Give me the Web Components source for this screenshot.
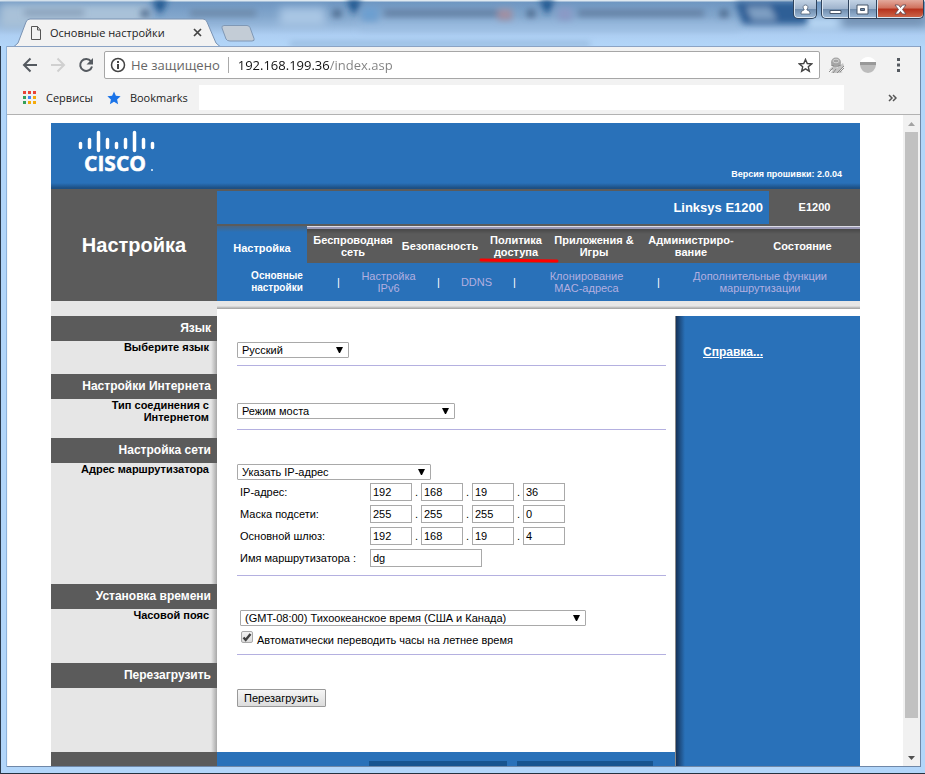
<!DOCTYPE html>
<html lang="ru">
<head>
<meta charset="utf-8">
<title>Основные настройки</title>
<style>
  body {
    margin: 0;
    font-family: "Liberation Sans", Arial, sans-serif;
    font-size: 11px;
    line-height: 12px;
    color: #000;
  }
</style>
</head>
<body>
<browser-window>
  <router-page></router-page>
</browser-window>

<script>
class TabStrip extends HTMLElement {
  constructor() {
    super();
    this.attachShadow({ mode: 'open' });
  }

  connectedCallback() {
    this.shadowRoot.innerHTML = `
      <style>
        :host {
          display: block;
          position: relative;
          height: 46px;
          overflow: hidden;
          background: linear-gradient(#dfe9f0 0, #dfe9f0 1px, #6f97c2 2px, #82a6cc 16px, #94b6da 25px, #aecff3 35px, #b2d5f8 46px);
        }
        .glass {
          position: absolute;
          inset: 0;
          width: 100%;
          height: 100%;
        }
        .tabs {
          position: relative;
          display: grid;
          grid-template-columns: 206px 40px;
          align-items: end;
          height: 47px;
          padding-left: 14px;
        }
        .tab {
          display: grid;
          height: 29px;
        }
        .tab > * {
          grid-area: 1 / 1;
        }
        .tab > svg {
          width: 206px;
          height: 29px;
        }
        .caption {
          display: flex;
          align-items: center;
          gap: 8px;
          padding: 0 18px 0 16px;
          font: 11px/16px "Open Sans", "Noto Sans", sans-serif;
          color: #222;
        }
        .caption span {
          flex: 1;
          white-space: nowrap;
        }
        .caption svg {
          display: block;
        }
        button {
          padding: 0;
          border: 0;
          background: none;
        }
        .new {
          align-self: start;
          margin-top: 25px;
          margin-left: -4px;
        }
        .controls {
          position: absolute;
          top: 0;
          right: 1px;
          display: flex;
          gap: 4px;
        }
        .controls div {
          display: flex;
        }
        .controls button {
          display: grid;
          place-items: center;
          box-sizing: border-box;
          width: 28px;
          height: 19px;
          border: solid #2f435c;
          border-width: 0 1px 1px 0;
          background: linear-gradient(#c3d3e5, #9fb4cd 48%, #6f8cad 50%, #9dbad8);
          box-shadow: inset 1px 0 #dbe6f1, inset 0 -1px #dbe6f1;
        }
        .controls button:first-child {
          border-left-width: 1px;
          border-bottom-left-radius: 5px;
        }
        .controls button:last-child {
          border-bottom-right-radius: 5px;
        }
        .controls .user {
          width: 24px;
        }
        .controls .close {
          width: 47px;
          background: linear-gradient(#e3a99c, #d0705c 45%, #b6311c 50%, #cd6a4c);
        }
      </style>
      <svg class="glass" viewBox="0 0 925 46" preserveAspectRatio="none" aria-hidden="true">
        <defs>
          <filter id="soft" x="-30%" y="-60%" width="160%" height="220%"><feGaussianBlur stdDeviation="4"/></filter>
          <filter id="fine" x="-30%" y="-60%" width="160%" height="220%"><feGaussianBlur stdDeviation="3"/></filter>
        </defs>
        <g filter="url(#soft)">
          <rect x="0" y="4" width="150" height="24" fill="#a9c1d8"/>
          <rect x="280" y="8" width="45" height="18" fill="#a9c6e4"/>
          <rect x="360" y="24" width="380" height="6" fill="#9abce0"/>
          <rect x="805" y="18" width="34" height="10" fill="#bddcf8"/>
          <rect x="842" y="16" width="83" height="9" fill="#6f8cad"/>
        </g>
        <g filter="url(#fine)">
          <path d="M152 0h16l-8 15zM346 0h16l-8 15zM539 0h16l-8 15z" fill="#1f558d"/>
          <path d="M735 2h72v22h-64z" fill="#2e5f96"/>
          <path d="M746 7h24l7 13h-25z" fill="#7e9fc3"/>
          <rect x="24" y="9" width="60" height="7" fill="#8aa2bb"/>
          <rect x="190" y="10" width="66" height="6" fill="#6b86a6"/>
          <rect x="362" y="7" width="16" height="14" fill="#6d9fd0"/>
          <rect x="384" y="10" width="116" height="6" fill="#607c9f"/>
          <rect x="498" y="9" width="14" height="11" fill="#a18fa2"/>
          <rect x="558" y="8" width="14" height="12" fill="#8b9ac6"/>
          <rect x="578" y="10" width="126" height="6" fill="#607c9f"/>
          <path d="M141 10h8v7h-8zM333 10h8v7h-8zM527 10h8v7h-8zM720 10h8v7h-8z" fill="#486588"/>
          <rect x="290" y="42" width="300" height="4" fill="#8fb1d6"/>
        </g>
      </svg>
      <div class="tabs">
        <div class="tab">
          <svg viewBox="0 0 206 29" aria-hidden="true">
            <path d="M0 29 4 25 12 4q1-3 4-3h173q3 0 4 3l9 21 4 4z" fill="#f2f2f2"/>
            <path d="M0 28.500 4 25 12 4q1-3 4-3h173q3 0 4 3l9 21 4 3.500" fill="none" stroke="#7a93b3"/>
          </svg>
          <div class="caption">
            <svg width="12" height="14" viewBox="0 0 12 14" fill="none" stroke="#555"><path d="M1.500.500h6l3 3.500v9.500h-9zM7.500.500v3.500h3"/></svg>
            <span>Основные настройки</span>
            <button aria-label="Закрыть вкладку"><svg width="9" height="9" viewBox="0 0 9 9" stroke="#444" stroke-width="1.700"><path d="m1 1 7 7m0-7-7 7"/></svg></button>
          </div>
        </div>
        <button class="new" aria-label="Новая вкладка">
          <svg width="34" height="17" viewBox="0 0 34 17"><path d="M3 .500h23q2 0 3 2l4 11q1 2.500-2 2.500H9q-3 0-4-2L1 3q-1-2 2-2.500z" fill="#c3ccd6" stroke="#8098b5"/></svg>
        </button>
      </div>
      <div class="controls">
        <div>
          <button class="user" aria-label="Пользователь"><svg width="11" height="11" viewBox="0 0 11 11" fill="#fff" stroke="#46566b" stroke-width=".7"><path d="M5.500 1a2.300 2.300 0 0 1 1.400 4.200v.8q3.100.5 3.100 3v1h-9v-1q0-2.500 3.100-3v-.8a2.300 2.300 0 0 1 1.400-4.200z"/></svg></button>
        </div>
        <div>
          <button aria-label="Свернуть"><svg width="13" height="11" viewBox="0 0 13 11"><path d="M1 6.500h11v3h-11z" fill="#fff" stroke="#46566b"/></svg></button>
          <button aria-label="Развернуть"><svg width="13" height="11" viewBox="0 0 13 11"><path d="M1 1h11v9h-11zM4.500 4.500v2h4v-2z" fill="#fff" fill-rule="evenodd" stroke="#46566b"/></svg></button>
          <button class="close" aria-label="Закрыть"><svg width="13" height="11" viewBox="0 0 13 11"><path d="M1 1h3.500l2 2.500 2-2.500h3.500l-3.500 4.500 3.500 4.500h-3.500l-2-2.500-2 2.500h-3.500l3.500-4.500z" fill="#fff" stroke="#5a4850" stroke-width=".8"/></svg></button>
        </div>
      </div>
    `;
  }
}

customElements.define('tab-strip', TabStrip);

class BrowserToolbar extends HTMLElement {
  constructor() {
    super();
    this.attachShadow({ mode: 'open' });
  }

  connectedCallback() {
    this.shadowRoot.innerHTML = `
      <style>
        :host {
          display: block;
          border-top: 1px solid #8ba3c4;
          border-bottom: 1px solid #b2b2b2;
          background: #f2f2f2;
          font: 11px/16px "Open Sans", "Noto Sans", sans-serif;
          color: #222;
        }
        svg {
          display: block;
        }
        button {
          padding: 0;
          border: 0;
          background: none;
        }
        .row {
          display: flex;
          align-items: center;
        }
        .address {
          gap: 12px;
          padding: 4px 15px;
        }
        .omnibox {
          display: flex;
          align-items: center;
          flex: 1;
          box-sizing: border-box;
          height: 28px;
          margin: 0 -4px 0 -2px;
          padding: 0 6px 0 5px;
          border: 1px solid #a6a6a6;
          border-radius: 2px;
          background: #fff;
          font-size: 13px;
        }
        .omnibox span {
          margin: 0 8px 0 5px;
          color: #666;
        }
        .omnibox input {
          flex: 1;
          min-width: 0;
          height: 16px;
          padding: 0 0 0 9px;
          border: 0;
          border-left: 1px solid #aaa;
          font: inherit;
          color: transparent;
          background: linear-gradient(90deg, #111 101px, #808080 101px);
          background-clip: text;
          outline: 0;
        }
        .extensions {
          gap: 14px;
        }
        .bookmarks {
          padding: 2px 23px 4px 16px;
        }
        .bookmarks a {
          display: flex;
          align-items: center;
          gap: 9px;
          margin-right: 14px;
          color: inherit;
          text-decoration: none;
        }
        .bookmarks a + a {
          margin-right: 11px;
        }
        .blank {
          flex: 1;
          height: 25px;
          margin-right: 44px;
          background: #fff;
        }
      </style>
      <div class="row address">
        <button aria-label="Назад"><svg width="16" height="16" viewBox="0 0 16 16" fill="none" stroke="#555a60" stroke-width="2"><path d="M15 8H2M8.500 1.500 2 8l6.500 6.500"/></svg></button>
        <button aria-label="Вперёд"><svg width="16" height="16" viewBox="0 0 16 16" fill="none" stroke="#d0d0d0" stroke-width="2"><path d="M1 8h13M7.500 1.500 14 8l-6.500 6.500"/></svg></button>
        <button aria-label="Обновить"><svg width="16" height="16" viewBox="0 0 16 16"><path d="M13 4.300A6 6 0 1 0 14 9.500" fill="none" stroke="#555a60" stroke-width="2"/><path d="M15 1v6.500H8.500z" fill="#555a60"/></svg></button>
        <div class="omnibox">
          <svg width="16" height="16" viewBox="0 0 16 16"><circle cx="8" cy="8" r="6.500" fill="none" stroke="#444" stroke-width="1.500"/><path d="M7 4h2v2h-2zM7 7h2v5h-2z" fill="#444"/></svg>
          <span>Не защищено</span>
          <input type="text" aria-label="Адрес" value="192.168.199.36/index.asp">
          <button aria-label="Добавить в закладки"><svg width="15" height="15" viewBox="0 0 16 16" fill="none" stroke="#444" stroke-width="1.500"><path d="m8 1.500 1.900 4.400 4.700.4-3.600 3.100 1.100 4.700L8 11.600l-4.100 2.500L5 9.400 1.400 6.300l4.700-.4z"/></svg></button>
        </div>
        <div class="row extensions">
          <svg width="17" height="17" viewBox="0 0 17 17">
            <path d="M1 13l4-4 4 2 6-5 1 3-4 5 3 1-3 1H3l2-3z" fill="#c4c4c4"/>
            <circle cx="8" cy="5.500" r="5" fill="#a4a4a4"/>
            <ellipse cx="8" cy="4" rx="3" ry="1.800" fill="none" stroke="#d2d2d2"/>
            <path d="m3 8 3 1M10 9l3-1M1 15l4-4m0 5 3-4m1 4 7-7m-4 6 4-4" stroke="#8c8c8c" fill="none"/>
          </svg>
          <svg width="18" height="16" viewBox="0 0 18 16"><path d="M1 5q3-5 8-5t8 5z" fill="#fff"/><path d="M1 5h16v3H1z" fill="#999"/><path d="M1 8h16q-1 7-8 8-7-1-8-8z" fill="#bcbcbc"/></svg>
          <button aria-label="Меню"><svg width="14" height="14" viewBox="0 0 14 14" fill="#555a60"><path d="M6 0h3v3H6zM6 5.500h3v3H6zM6 11h3v3H6z"/></svg></button>
        </div>
      </div>
      <nav class="row bookmarks">
        <a href="#apps"><svg width="14" height="14" viewBox="0 0 14 14"><path d="M0 0h3v3H0zM5 0h3v3H5zM10 0h3v3h-3z" fill="#ea4335"/><path d="M0 5h3v3H0zM0 10h3v3H0z" fill="#34a05a"/><path d="M5 5h3v3H5z" fill="#4285f4"/><path d="M10 5h3v3h-3zM5 10h3v3H5zM10 10h3v3h-3z" fill="#f5ab0c"/></svg>Сервисы</a>
        <a href="#bookmarks"><svg width="14" height="14" viewBox="0 0 14 14"><path d="m7 .500 1.900 4.300 4.700.5-3.500 3.200 1 4.700L7 10.800l-4.100 2.400 1-4.700L.400 5.300l4.700-.5z" fill="#1a73e8"/></svg>Bookmarks</a>
        <div class="blank"></div>
        <button aria-label="Другие закладки"><svg width="9" height="8" viewBox="0 0 9 8" fill="none" stroke="#555" stroke-width="1.500"><path d="m1 1 3 3-3 3m4-6 3 3-3 3"/></svg></button>
      </nav>
    `;
  }
}

customElements.define('browser-toolbar', BrowserToolbar);

class BrowserWindow extends HTMLElement {
  constructor() {
    super();
    this.attachShadow({ mode: 'open' });
  }

  connectedCallback() {
    this.shadowRoot.innerHTML = `
      <style>
        :host {
          display: grid;
          grid-template-rows: auto 1fr 7px;
          height: 100vh;
          overflow: hidden;
          background: #b2d6fa;
          box-shadow: inset 1px 0 #2b3a4c, inset 0 -1px #26323f;
        }
        .frame {
          display: grid;
          grid-template-rows: auto 1fr;
          min-height: 0;
          margin: 0 4px 0 7px;
          border: solid #6f88a8;
          border-width: 0 1px 1px 0;
          box-shadow: -1px 0 #8fb4dc;
        }
        .view {
          display: grid;
          grid-template-columns: 1fr 17px;
          min-height: 0;
          border-left: 1px solid #f5f8fb;
          background: #fff;
        }
        .content {
          overflow: hidden;
        }
        .scroll {
          display: grid;
          grid-template-rows: 17px 1fr 17px;
          justify-items: center;
          align-items: center;
          background: #f1f1f1;
        }
        .thumb {
          align-self: start;
          width: 13px;
          height: 95%;
          background: #c1c1c1;
        }
      </style>
      <tab-strip></tab-strip>
      <div class="frame">
        <browser-toolbar></browser-toolbar>
        <div class="view">
          <div class="content"><slot></slot></div>
          <div class="scroll" aria-hidden="true">
            <svg width="7" height="4" viewBox="0 0 7 4"><path d="M0 4h7L3.500 0z" fill="#a3a3a3"/></svg>
            <div class="thumb"></div>
            <svg width="7" height="4" viewBox="0 0 7 4"><path d="M0 0h7L3.500 4z" fill="#505050"/></svg>
          </div>
        </div>
      </div>
    `;
  }
}

customElements.define('browser-window', BrowserWindow);

class SiteHeader extends HTMLElement {
  constructor() {
    super();
    this.attachShadow({ mode: 'open' });
  }

  connectedCallback() {
    this.shadowRoot.innerHTML = `
      <style>
        :host {
          display: block;
          color: #fff;
        }
        .brand {
          display: flex;
          justify-content: space-between;
          align-items: flex-end;
          box-sizing: border-box;
          height: 66px;
          padding: 0 18px 9px 26px;
          background: linear-gradient(transparent 60px, #1d4f83 65px), #2971b9;
        }
        .brand svg {
          display: block;
        }
        .version {
          font-size: 9px;
          font-weight: bold;
        }
        .bar {
          display: grid;
          grid-template-columns: 166px 1fr;
          background: #5b5b5b;
          font-weight: bold;
          text-align: center;
        }
        h1 {
          margin: 0;
          align-self: center;
          font-size: 20px;
          line-height: 24px;
        }
        .model {
          display: grid;
          grid-template-columns: 1fr 91px;
          align-items: center;
          margin: 2px 0;
          line-height: 33px;
        }
        .model b {
          padding-right: 6px;
          background: #2971b9;
          font-size: 13px;
          text-align: right;
        }
        .tabs {
          display: grid;
          grid-template-columns: 90fr 92fr 82fr 70fr 86fr 108fr 115fr;
          height: 37px;
        }
        a {
          color: inherit;
          text-decoration: none;
        }
        .tabs a {
          position: relative;
          display: grid;
          place-items: center;
          padding-top: 3px;
          background: linear-gradient(#dcdce6 1px, #9a98b4 1px, #9a98b4 3px, #474747 3px, #5b5b5b 8px);
        }
        .tabs a.active {
          padding-top: 7px;
          background: linear-gradient(#4b6580, #2971b9 6px);
        }
        .tabs a.marked {
          z-index: 1;
        }
        .tabs svg {
          position: absolute;
          left: -2px;
          bottom: 0;
        }
        .subnav {
          display: grid;
          grid-template-columns: 120fr 3px 97fr 3px 73fr 3px 141fr 3px 200fr;
          align-items: center;
          justify-items: center;
          height: 38px;
          background: #2971b9;
          font-weight: normal;
        }
        .subnav a {
          color: #b3afe0;
        }
        .subnav .active {
          color: #fff;
          font-size: 10px;
          font-weight: bold;
        }
        .edge {
          display: grid;
          grid-template-columns: 166px 1fr;
          height: 15px;
          background: linear-gradient(#e6e6e6 5px, #c8c8c8 6px, #9f9f9f 8px, #fff 8px);
        }
        .edge div {
          background: #e6e6e6;
        }
      </style>
      <div class="brand">
        <svg width="90" height="54" viewBox="0 0 90 54" role="img" aria-label="Cisco">
          <path d="M3.500 17.500v4M12.500 13.500v8M21.500 6.500v18M30.500 13.500v8M39.500 17.500v4M48.500 13.500v8M57.500 6.500v18M66.500 13.500v8M75.500 17.500v4" stroke="#fff" stroke-width="3.500" stroke-linecap="round"/>
          <text x="7" y="45" font-family="Open Sans, sans-serif" font-size="21" font-weight="700" fill="#fff" stroke="#fff" stroke-width=".5">CISCO</text>
          <path d="M74 43h2v2h-2z" fill="#b9d3ec"/>
        </svg>
        <div class="version">Версия прошивки: 2.0.04</div>
      </div>
      <div class="bar">
        <h1>Настройка</h1>
        <div>
          <div class="model"><b>Linksys E1200</b><span>E1200</span></div>
          <nav class="tabs">
            <a class="active" href="#setup">Настройка</a>
            <a href="#wireless">Беспроводная<br>сеть</a>
            <a href="#security">Безопасность</a>
            <a class="marked" href="#access">Политика<br>доступа<svg width="80" height="5" viewBox="0 0 80 5" aria-hidden="true"><path d="M2 2 78 3" stroke="#f00" stroke-width="3" stroke-linecap="round"/></svg></a>
            <a href="#games">Приложения &amp;<br>Игры</a>
            <a href="#admin">Администриро-<br>вание</a>
            <a href="#status">Состояние</a>
          </nav>
          <nav class="subnav">
            <a class="active" href="#basic">Основные<br>настройки</a><span>|</span>
            <a href="#ipv6">Настройка<br>IPv6</a><span>|</span>
            <a href="#ddns">DDNS</a><span>|</span>
            <a href="#mac">Клонирование<br>MAC-адреса</a><span>|</span>
            <a href="#routing">Дополнительные функции<br>маршрутизации</a>
          </nav>
        </div>
      </div>
      <div class="edge"><div></div></div>
    `;
  }
}

customElements.define('site-header', SiteHeader);

// One block of settings: heading and label on the left, controls on the right
class SettingSection extends HTMLElement {
  constructor() {
    super();
    this.attachShadow({ mode: 'open' });
  }

  connectedCallback() {
    this.shadowRoot.innerHTML = `
      <style>
        :host {
          display: grid;
          grid-template-columns: 166px 1fr;
        }
        .side {
          background: linear-gradient(90deg, transparent 160px, #a8a8a8 166px), #e6e6e6;
          font-weight: bold;
          text-align: right;
        }
        h2 {
          margin: 0;
          padding-right: 6px;
          background: #5b5b5b;
          color: #fff;
          font-size: 12px;
          line-height: 25px;
        }
        .label {
          padding: 0 8px 0 20px;
        }
        .fields {
          padding: 26px 9px 8px 20px;
        }
      </style>
      <div class="side">
        <h2>${this.getAttribute('heading')}</h2>
        <div class="label"><slot name="label"></slot></div>
      </div>
      <div class="fields"><slot></slot></div>
    `;
  }
}

customElements.define('setting-section', SettingSection);

class IpField extends HTMLElement {
  constructor() {
    super();
    this.attachShadow({ mode: 'open' });
  }

  connectedCallback() {
    const label = this.getAttribute('label');
    const octets = this.getAttribute('value').split('.');
    const inputs = octets
      .map((octet, i) => `<input type="text" maxlength="3" aria-label="${label} ${i + 1}" value="${octet}">`)
      .join('<span>.</span>');

    this.shadowRoot.innerHTML = `
      <style>
        :host {
          display: block;
        }
        [role="group"] {
          display: flex;
          align-items: center;
          height: 22px;
        }
        .name {
          width: 130px;
        }
        input {
          box-sizing: border-box;
          width: 42px;
          height: 18px;
          padding: 0 2px;
          border: 1px solid #a9a9a9;
          font: inherit;
        }
        .name ~ span {
          width: 9px;
          text-align: center;
        }
      </style>
      <div role="group" aria-label="${label}">
        <span class="name">${label}</span>${inputs}
      </div>
    `;
  }
}

customElements.define('ip-field', IpField);

class RouterPage extends HTMLElement {
  constructor() {
    super();
    this.attachShadow({ mode: 'open' });
  }

  picker(id, text, className) {
    return `
      <span class="picker ${className}">
        <select id="${id}"><option>${text}</option></select>
        <svg width="7" height="6" viewBox="0 0 7 6" aria-hidden="true"><path d="M0 0h7L4 6h-1z"/></svg>
      </span>
    `;
  }

  connectedCallback() {
    this.shadowRoot.innerHTML = `
      <style>
        :host {
          display: block;
          max-width: 809px;
          margin: 8px auto 0;
        }
        .body {
          display: grid;
          grid-template-columns: 1fr 185px;
        }
        aside {
          padding: 30px 27px;
          border-left: 1px solid #8a8a8a;
          box-sizing: border-box;
          background: linear-gradient(90deg, #15335a, #2971b9 9px);
        }
        aside a {
          color: #fff;
          font-size: 12px;
          font-weight: bold;
        }
        hr {
          height: 1px;
          margin: 7px 0 0;
          border: 0;
          background: #b4b0e0;
        }
        .picker {
          display: grid;
          align-items: center;
          height: 16px;
        }
        .picker > * {
          grid-area: 1 / 1;
        }
        .picker svg {
          justify-self: end;
          margin-right: 6px;
          pointer-events: none;
        }
        .small { width: 112px; }
        .medium { width: 194px; }
        .large { width: 218px; }
        .wide { width: 346px; }
        select {
          appearance: none;
          box-sizing: border-box;
          width: 100%;
          height: 16px;
          padding: 0 18px 0 4px;
          border: 1px solid #a9a9a9;
          border-radius: 1px;
          background: #fff;
          font: inherit;
          color: #000;
        }
        .connection {
          padding-top: 3px;
        }
        .connection + hr {
          margin-top: 10px;
        }
        .network {
          padding: 1px 0 0 3px;
        }
        .network + hr {
          margin-top: 6px;
        }
        .router {
          display: flex;
          align-items: center;
          height: 22px;
        }
        .router label {
          width: 130px;
        }
        .router input {
          box-sizing: border-box;
          width: 112px;
          height: 18px;
          padding: 0 2px;
          border: 1px solid #a9a9a9;
          font: inherit;
        }
        .time {
          padding-left: 3px;
        }
        .daylight {
          display: flex;
          gap: 4px;
          padding: 5px 0 1px 1px;
        }
        .daylight label {
          padding-top: 3px;
        }
        .daylight input {
          appearance: none;
          box-sizing: border-box;
          width: 12px;
          height: 12px;
          margin: 0;
          border: 1px solid #a9a9a9;
          border-radius: 2px;
          background: linear-gradient(#f2f2f2, #dcdcdc);
        }
        .tick {
          display: grid;
          align-self: start;
        }
        .tick > * {
          grid-area: 1 / 1;
        }
        .tick svg {
          pointer-events: none;
        }
        .restart {
          padding-bottom: 37px;
        }
        .restart button {
          display: block;
          height: 18px;
          padding: 0 6px;
          border: 1px solid #999;
          border-radius: 1px;
          background: linear-gradient(#f6f6f6, #dcdcdc);
          font: inherit;
        }
        footer {
          display: grid;
          grid-template-columns: 166px 1fr;
          background: #5b5b5b;
        }
        .actions {
          display: flex;
          justify-content: flex-end;
          gap: 10px;
          padding: 9px 22px 16px;
          background: #2971b9;
        }
        .actions button {
          height: 18px;
          padding: 0 10px;
          border: 0;
          background: #17548f;
          color: #fff;
          font: inherit;
          font-weight: bold;
        }
      </style>
      <site-header></site-header>
      <div class="body">
        <main>
          <setting-section heading="Язык">
            <label slot="label" for="language">Выберите язык</label>
            ${this.picker('language', 'Русский', 'small')}
            <hr>
          </setting-section>
          <setting-section heading="Настройки Интернета">
            <label slot="label" for="wan">Тип соединения с Интернетом</label>
            <div class="connection">${this.picker('wan', 'Режим моста', 'large')}</div>
            <hr>
          </setting-section>
          <setting-section heading="Настройка сети">
            <label slot="label" for="mode">Адрес маршрутизатора</label>
            ${this.picker('mode', 'Указать IP-адрес', 'medium')}
            <div class="network">
              <ip-field label="IP-адрес:" value="192.168.19.36"></ip-field>
              <ip-field label="Маска подсети:" value="255.255.255.0"></ip-field>
              <ip-field label="Основной шлюз:" value="192.168.19.4"></ip-field>
              <div class="router"><label for="name">Имя маршрутизатора :</label><input id="name" type="text" value="dg"></div>
            </div>
            <hr>
          </setting-section>
          <setting-section heading="Установка времени">
            <label slot="label" for="zone">Часовой пояс</label>
            <div class="time">
              ${this.picker('zone', '(GMT-08:00) Тихоокеанское время (США и Канада)', 'wide')}
              <div class="daylight">
                <span class="tick">
                  <input id="dst" type="checkbox" checked>
                  <svg width="12" height="12" viewBox="0 0 12 12" aria-hidden="true"><path d="m2.500 6.500 2.200 2.500L9.500 3" fill="none" stroke="#404040" stroke-width="2.400"/></svg>
                </span>
                <label for="dst">Автоматически переводить часы на летнее время</label>
              </div>
            </div>
            <hr>
          </setting-section>
          <setting-section heading="Перезагрузить">
            <div class="restart"><button>Перезагрузить</button></div>
          </setting-section>
          <footer>
            <div></div>
            <div class="actions">
              <button>Сохранить настройки</button>
              <button>Отменить изменения</button>
            </div>
          </footer>
        </main>
        <aside><a href="#help">Справка...</a></aside>
      </div>
    `;
  }
}

customElements.define('router-page', RouterPage);
</script>
</body>
</html>
